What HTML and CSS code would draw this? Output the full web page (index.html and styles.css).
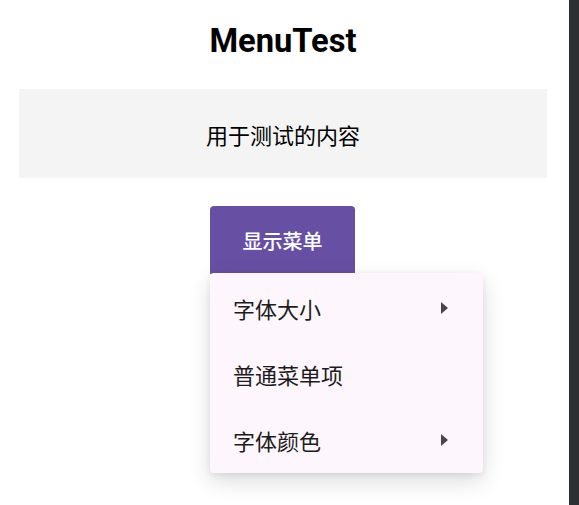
FILE: index.html
```html
<!DOCTYPE html>
<html lang="zh">
<head>
<meta charset="utf-8">
<title>MenuTest</title>
<link rel="stylesheet" href="styles.css">
</head>
<body>
<div class="screen">
  <main class="page">
    <h1 class="title">MenuTest</h1>
    <div class="content-box">用于测试的内容</div>
    <div class="anchor">
      <button class="show-btn">显示菜单</button>
      <div class="menu">
        <div class="menu-item"><span>字体大小</span><span class="arrow"></span></div>
        <div class="menu-item"><span>普通菜单项</span></div>
        <div class="menu-item"><span>字体颜色</span><span class="arrow"></span></div>
      </div>
    </div>
  </main>
  <div class="scrollbar"></div>
</div>
</body>
</html>
```

FILE: styles.css
```css
html, body {
  margin: 0;
  padding: 0;
  background: #ffffff;
}
.screen {
  display: flex;
  width: 579px;
  height: 505px;
  overflow: hidden;
}
.page {
  width: 569px;
  box-sizing: border-box;
  padding: 22px 22px 0 19px;
  display: flex;
  flex-direction: column;
  align-items: center;
}
.title {
  margin: 0;
  font-family: Roboto, "Liberation Sans", sans-serif;
  font-weight: 700;
  font-size: 32.7px;
  line-height: 38px;
  color: #000;
}
.content-box {
  margin-top: 29px;
  align-self: stretch;
  height: 89px;
  background: #f4f4f4;
  display: flex;
  align-items: center;
  justify-content: center;
  font-family: "Noto Sans CJK SC", sans-serif;
  font-size: 22px;
  color: #000;
}
.anchor {
  position: relative;
  margin-top: 28px;
  margin-right: 1px;
}
.show-btn {
  display: block;
  width: 145px;
  height: 70px;
  border: none;
  border-radius: 4px;
  background: #6750a4;
  color: #ffffff;
  font-family: "Noto Sans CJK SC", sans-serif;
  font-size: 20px;
  font-weight: 500;
  padding: 0 0 2px 0;
}
.menu {
  position: absolute;
  top: 67px;
  left: 0;
  width: 273px;
  height: 200px;
  box-sizing: border-box;
  padding-top: 2px;
  background: #fdf7fd;
  border-radius: 4px;
  box-shadow: 0 8px 22px rgba(0, 0, 0, 0.14), 0 2px 6px rgba(0, 0, 0, 0.07);
}
.menu-item {
  height: 66px;
  display: flex;
  align-items: center;
  justify-content: space-between;
  padding: 0 35px 0 23px;
  font-family: "Noto Sans CJK SC", sans-serif;
  font-size: 22px;
  color: #1d1b20;
}
.arrow {
  width: 0;
  height: 0;
  border-top: 6px solid transparent;
  border-bottom: 6px solid transparent;
  border-left: 7px solid #49454f;
}
.scrollbar {
  width: 10px;
  height: 505px;
  background: #2e2f33;
}
```
